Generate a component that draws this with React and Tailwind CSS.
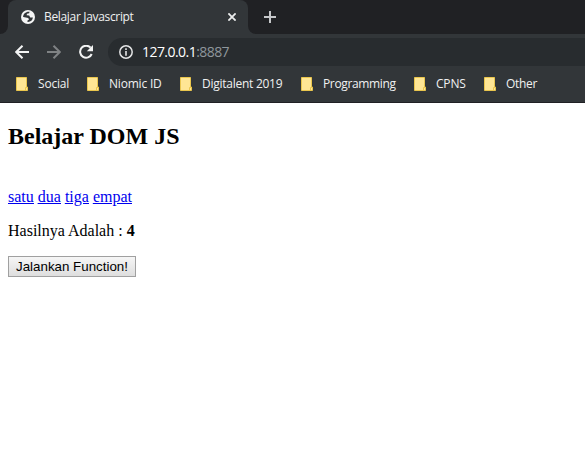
const UI = "font-['Open_Sans','Noto_Sans',sans-serif]";

const bookmarks = [
  { label: 'Social', box: 'w-[71px]', text: 'tracking-[-0.2px]' },
  { label: 'Niomic ID', box: 'w-[93px]', text: 'tracking-[-0.2px]' },
  { label: 'Digitalent 2019', box: 'w-[121px]', text: 'tracking-[-0.26px]' },
  { label: 'Programming', box: 'w-[113px]', text: 'tracking-[-0.35px]' },
  { label: 'CPNS', box: 'w-[70px]', text: 'tracking-[-0.2px]' },
  { label: 'Other', box: 'w-[70px]', text: 'tracking-[-0.3px]' },
];

function Globe() {
  return (
    <svg className="shrink-0" width="14" height="14" viewBox="0 0 14 14">
      <circle cx="7" cy="7" r="7" fill="#f4f5f5" />
      <path
        d="M8.6 1.8 L8.1 3.3 L6 3.7 L5.6 5.2 L8.2 5.6 L9.2 7.4 L11.9 7.5 C11.7 10.2 9.4 12.2 6.5 11.9 L6.5 10.4 L8 9.5 L7.2 8 L4.8 7.5 L2.1 6.9 C2.1 3.8 5 1.3 8.6 1.8 Z"
        fill="#323639"
      />
      <path d="M2.2 6.9 L4.9 9.6 L4.9 11.2 C3.2 10.4 2.1 8.9 2.2 6.9Z" fill="#f4f5f5" />
    </svg>
  );
}

function Folder() {
  return (
    <svg className="shrink-0" width="12" height="14" viewBox="0 0 12 14">
      <path d="M.5.5H10.5V10H11.5V13.5H.5Z" fill="#ffe694" stroke="#eac64d" />
      <path d="M9.5 13V10.5H11" fill="none" stroke="#eac64d" />
    </svg>
  );
}

function Arrow({ className }) {
  return (
    <svg className={className} width="14" height="14" viewBox="0 0 14 14" fill="none" stroke="currentColor" strokeWidth="2">
      <path d="M14 7H1.5M7.5.7L1.2 7L7.5 13.3" />
    </svg>
  );
}

function TabStrip() {
  return (
    <div className="flex h-[34px] bg-[#202124]">
      <div className="flex w-2 items-end bg-[#323639]">
        <div className="h-full w-2 rounded-br-lg bg-[#202124]" />
      </div>
      <div className="flex w-[240px] items-center rounded-t-lg bg-[#323639] pl-[13px] pr-3">
        <Globe />
        <span className="ml-[9px] flex-1 whitespace-nowrap text-[12px] tracking-[-0.33px] text-[#f0f1f1]">Belajar Javascript</span>
        <svg width="8" height="8" viewBox="0 0 8 8" stroke="#eceeee" strokeWidth="1.8">
          <path d="M.4.4L7.6 7.6M7.6.4L.4 7.6" />
        </svg>
      </div>
      <div className="w-2 bg-[#323639]">
        <div className="h-full w-2 rounded-bl-lg bg-[#202124]" />
      </div>
      <svg className="ml-2 mt-[11px]" width="12" height="12" viewBox="0 0 12 12" stroke="#c6c8ca" strokeWidth="2">
        <path d="M6 0V12M0 6H12" />
      </svg>
    </div>
  );
}

function Toolbar() {
  return (
    <div className="flex h-9 items-center pl-[15px]">
      <Arrow className="text-[#f3f4f4]" />
      <Arrow className="ml-[18px] rotate-180 text-[#7f8284]" />
      <svg className="ml-[18px]" width="15" height="14" viewBox="0 0 15 14">
        <path d="M11.6 2.7A6 6 0 1 0 12.7 9" fill="none" stroke="#f3f4f4" strokeWidth="2" />
        <path d="M14 0V6.2H7.8Z" fill="#f3f4f4" />
      </svg>
      <div className="ml-[14px] flex h-7 flex-1 items-center rounded-l-full bg-[#282c2f] pl-[11px]">
        <svg width="14" height="14" viewBox="0 0 14 14">
          <circle cx="7" cy="7" r="6.2" fill="none" stroke="#e4e5e6" strokeWidth="1.5" />
          <path d="M7 3.3V5M7 6V10.8" stroke="#e4e5e6" strokeWidth="1.6" />
        </svg>
        <span className="ml-[9px] pb-0.5 text-[14px] tracking-[-0.55px] text-white">
          127.0.0.1<span className="text-[#8f979c]">:8887</span>
        </span>
      </div>
    </div>
  );
}

function BookmarkBar() {
  return (
    <div className="flex h-7 items-center pl-4">
      {bookmarks.map((b) => (
        <div key={b.label} className={`flex shrink-0 items-center gap-[10px] ${b.box}`}>
          <Folder />
          <span className={`whitespace-nowrap text-[12px] text-[#f0f1f1] ${b.text}`}>{b.label}</span>
        </div>
      ))}
    </div>
  );
}

export default function App() {
  return (
    <div className="h-[465px] w-[585px] overflow-hidden bg-white">
      <header className={`h-[103px] border-b border-[#202124] bg-[#323639] ${UI}`}>
        <TabStrip />
        <Toolbar />
        <BookmarkBar />
      </header>
      <main className="px-2 pt-5 font-['Liberation_Serif',serif] text-black">
        <h2 className="text-[24px] font-bold leading-[27px]">Belajar DOM JS</h2>
        <nav className="mt-[38px] flex gap-1 text-[16px] leading-[18px] text-[#0000ee] underline">
          <a href="#satu">satu</a>
          <a href="#dua">dua</a>
          <a href="#tiga">tiga</a>
          <a href="#empat">empat</a>
        </nav>
        <p className="mt-4 text-[16px] leading-[18px]">
          Hasilnya Adalah : <b>4</b>
        </p>
        <button className="mt-4 flex h-[21px] w-32 items-center justify-center whitespace-nowrap border border-[#a0a0a0] bg-linear-to-b from-[#f6f6f6] to-[#dedede] font-['Liberation_Sans',sans-serif] text-[13.333px]">
          Jalankan Function!
        </button>
      </main>
    </div>
  );
}
